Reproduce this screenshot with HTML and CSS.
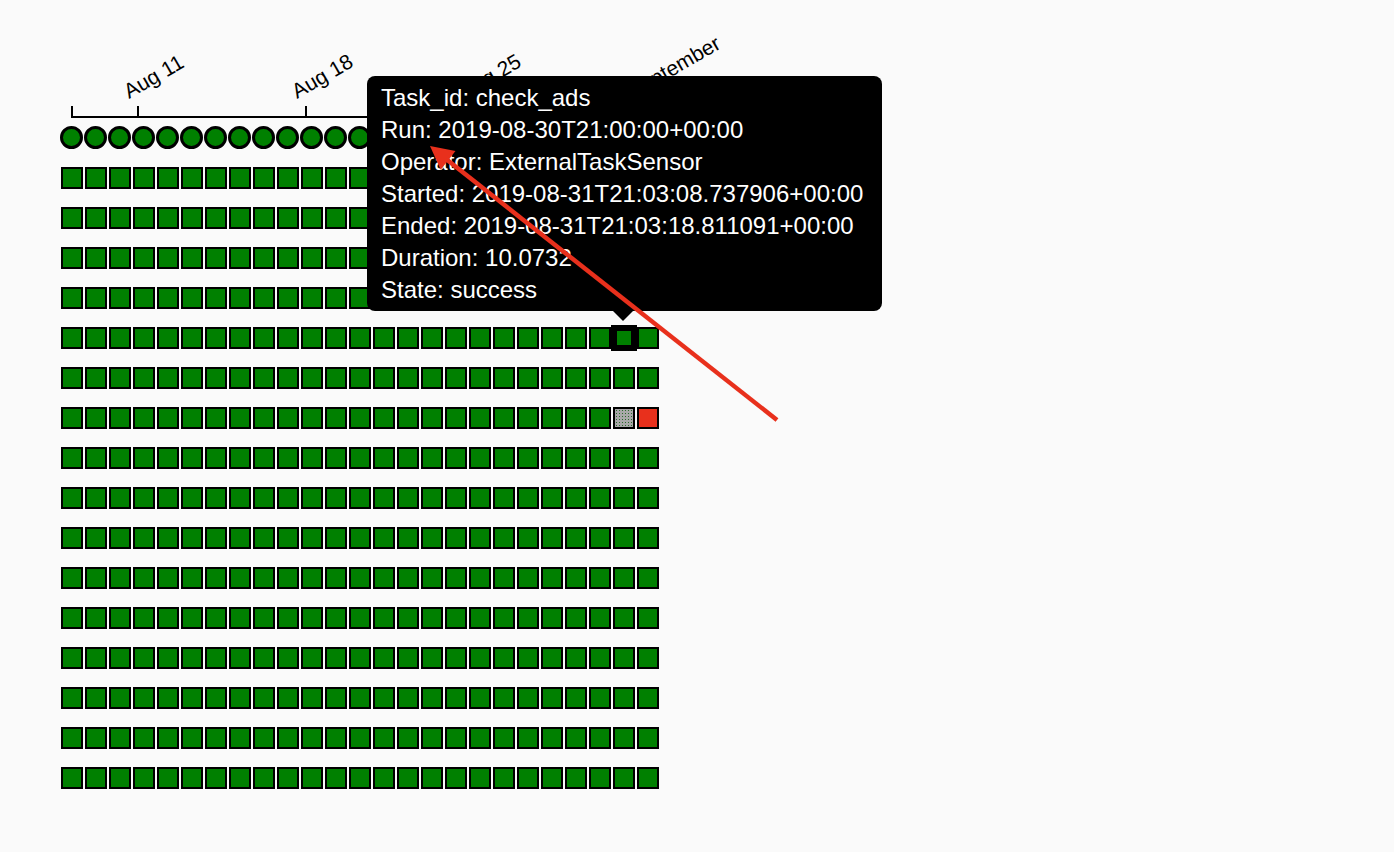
FILE: index.html
```html
<!DOCTYPE html>
<html lang="en">
<head>
<meta charset="utf-8">
<title>Tree view</title>
<link rel="stylesheet" href="styles.css">
</head>
<body>
<main class="tree">
  <svg class="axis" width="760" height="126" viewBox="0 0 760 126">
    <path class="domain" d="M72,106V117H648V106"></path>
    <g class="tick"><line x1="138" y1="106" x2="138" y2="117"></line><text transform="translate(129,99) rotate(-30)">Aug 11</text></g>
    <g class="tick"><line x1="306" y1="106" x2="306" y2="117"></line><text transform="translate(297,99) rotate(-30)">Aug 18</text></g>
    <g class="tick"><line x1="474" y1="106" x2="474" y2="117"></line><text transform="translate(465,99) rotate(-30)">Aug 25</text></g>
    <g class="tick"><line x1="642" y1="106" x2="642" y2="117"></line><text transform="translate(633,99) rotate(-30)">September</text></g>
  </svg>
  <div class="dagruns" id="dagruns"></div>
  <div class="tasks" id="tasks"></div>
</main>

<div class="tooltip">
  <div>Task_id: check_ads</div>
  <div>Run: 2019-08-30T21:00:00+00:00</div>
  <div>Operator: ExternalTaskSensor</div>
  <div>Started: 2019-08-31T21:03:08.737906+00:00</div>
  <div>Ended: 2019-08-31T21:03:18.811091+00:00</div>
  <div>Duration: 10.0732</div>
  <div>State: success</div>
</div>

<svg class="annotation" width="1394" height="852" viewBox="0 0 1394 852">
  <line x1="777" y1="420" x2="446" y2="159"></line>
  <polygon points="430,146 455.5,150.9 440.7,169.7"></polygon>
</svg>

<script src="script.js"></script>
</body>
</html>
```

FILE: script.js
```js
(function () {
  var cols = 25, rows = 16;
  var runs = document.getElementById('dagruns');
  for (var i = 0; i < cols; i++) {
    var c = document.createElement('span');
    c.className = 'run';
    runs.appendChild(c);
  }
  var tasks = document.getElementById('tasks');
  for (var r = 0; r < rows; r++) {
    for (var k = 0; k < cols; k++) {
      var n = document.createElement('span');
      n.className = 'node';
      if (r === 4 && k === 23) n.className += ' hover';
      if (r === 6 && k === 23) n.className += ' queued';
      if (r === 6 && k === 24) n.className += ' failed';
      tasks.appendChild(n);
    }
  }
})();
```

FILE: styles.css
```css
html, body {
  margin: 0;
  padding: 0;
  background: #fafafa;
  font-family: "Liberation Sans", Arial, Helvetica, sans-serif;
}

.tree {
  width: 760px;
}

.axis {
  display: block;
}

.axis .domain,
.axis line {
  fill: none;
  stroke: #000;
  stroke-width: 2;
}

.axis text {
  font-family: "Liberation Sans", Arial, sans-serif;
  font-size: 21px;
  fill: #000;
}

.dagruns {
  display: flex;
  gap: 1px;
  margin-left: 60px;
}

.run {
  box-sizing: border-box;
  width: 23px;
  height: 23px;
  border: 3px solid #000;
  border-radius: 50%;
  background: #008000;
}

.tasks {
  display: grid;
  grid-template-columns: repeat(25, 22px);
  grid-auto-rows: 22px;
  column-gap: 2px;
  row-gap: 18px;
  margin: 18px 0 0 61px;
}

.node {
  box-sizing: border-box;
  width: 22px;
  height: 22px;
  border: 2px solid #000;
  background: #008000;
}

.node.hover {
  border-width: 4px;
  box-shadow: 0 0 0 2px #000;
}

.node.queued {
  background-color: #a8a8a8;
  background-image: radial-gradient(circle, #2c6b2c 0.7px, transparent 0.9px);
  background-size: 3px 3px;
}

.node.failed {
  background: #e8301c;
}

.tooltip {
  position: absolute;
  left: 367px;
  top: 76px;
  box-sizing: border-box;
  width: 515px;
  height: 235px;
  padding: 6px 10px 5px 14px;
  background: #000;
  color: #fff;
  border-radius: 8px;
  font-size: 24px;
  line-height: 32px;
  white-space: nowrap;
}

.tooltip::after {
  content: "";
  position: absolute;
  left: 246px;
  top: 100%;
  border-top: 10px solid #000;
  border-left: 10px solid transparent;
  border-right: 10px solid transparent;
}

.annotation {
  position: absolute;
  left: 0;
  top: 0;
  pointer-events: none;
}

.annotation line {
  stroke: #e8301c;
  stroke-width: 4.5;
}

.annotation polygon {
  fill: #e8301c;
}
```
